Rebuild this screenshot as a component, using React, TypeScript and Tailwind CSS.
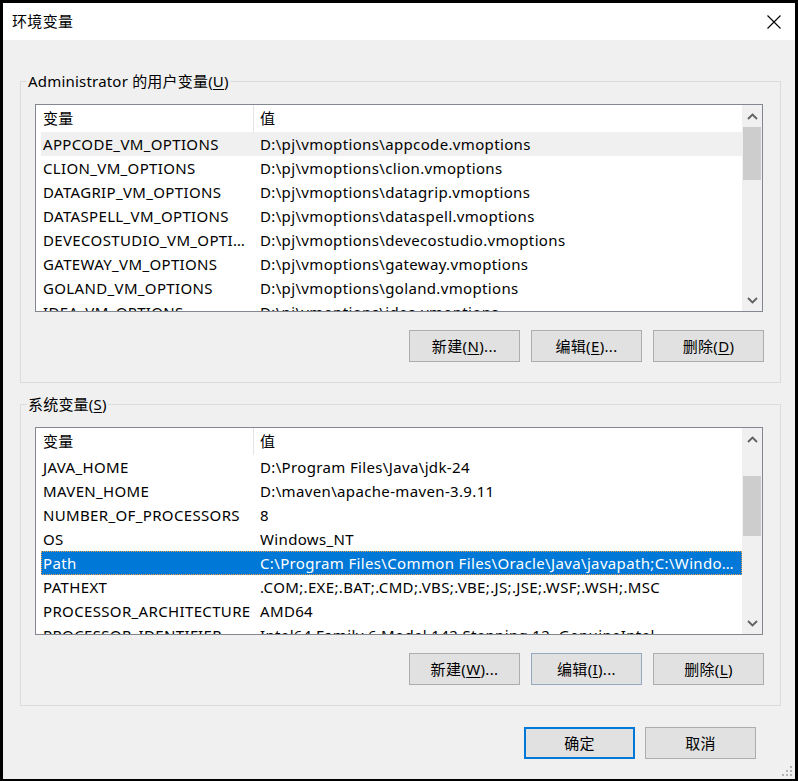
import React from "react";

type Row = { name: string; value: string; hover?: boolean; selected?: boolean };

const userRows: Row[] = [
  { name: "APPCODE_VM_OPTIONS", value: "D:\\pj\\vmoptions\\appcode.vmoptions", hover: true },
  { name: "CLION_VM_OPTIONS", value: "D:\\pj\\vmoptions\\clion.vmoptions" },
  { name: "DATAGRIP_VM_OPTIONS", value: "D:\\pj\\vmoptions\\datagrip.vmoptions" },
  { name: "DATASPELL_VM_OPTIONS", value: "D:\\pj\\vmoptions\\dataspell.vmoptions" },
  { name: "DEVECOSTUDIO_VM_OPTIONS", value: "D:\\pj\\vmoptions\\devecostudio.vmoptions" },
  { name: "GATEWAY_VM_OPTIONS", value: "D:\\pj\\vmoptions\\gateway.vmoptions" },
  { name: "GOLAND_VM_OPTIONS", value: "D:\\pj\\vmoptions\\goland.vmoptions" },
  { name: "IDEA_VM_OPTIONS", value: "D:\\pj\\vmoptions\\idea.vmoptions" },
];

const sysRows: Row[] = [
  { name: "JAVA_HOME", value: "D:\\Program Files\\Java\\jdk-24" },
  { name: "MAVEN_HOME", value: "D:\\maven\\apache-maven-3.9.11" },
  { name: "NUMBER_OF_PROCESSORS", value: "8" },
  { name: "OS", value: "Windows_NT" },
  {
    name: "Path",
    value:
      "C:\\Program Files\\Common Files\\Oracle\\Java\\javapath;C:\\Windows\\system32;C:\\Windows;C:\\Windows\\System32\\Wbem",
    selected: true,
  },
  { name: "PATHEXT", value: ".COM;.EXE;.BAT;.CMD;.VBS;.VBE;.JS;.JSE;.WSF;.WSH;.MSC" },
  { name: "PROCESSOR_ARCHITECTURE", value: "AMD64" },
  { name: "PROCESSOR_IDENTIFIER", value: "Intel64 Family 6 Model 142 Stepping 12, GenuineIntel" },
];

function ChevronUp() {
  return (
    <svg width="11" height="7" viewBox="0 0 11 7">
      <path d="M1 6 L5.5 1.5 L10 6" fill="none" stroke="#606060" strokeWidth="1.8" />
    </svg>
  );
}
function ChevronDown() {
  return (
    <svg width="11" height="7" viewBox="0 0 11 7">
      <path d="M1 1 L5.5 5.5 L10 1" fill="none" stroke="#606060" strokeWidth="1.8" />
    </svg>
  );
}

function ListView({ rows, thumbTop, thumbH }: { rows: Row[]; thumbTop: string; thumbH: string }) {
  return (
    <div className="ml-[14px] w-[728px] h-[208px] border border-[#828790] bg-white flex">
      <div className="flex-1 min-w-0 overflow-hidden flex flex-col pl-[5px]">
        <div className="h-[27px] shrink-0 flex">
          <div className="w-[212px] pl-[2px] flex items-center">变量</div>
          <div className="w-px bg-[#e5e5e5]" />
          <div className="flex-1 pl-[6px] flex items-center">值</div>
        </div>
        {rows.map((r) => (
          <div
            key={r.name}
            className={
              "h-[24px] shrink-0 flex items-center " +
              (r.selected
                ? "bg-[#0078d7] text-white outline outline-1 outline-dotted outline-[#e8a050] -outline-offset-1"
                : r.hover
                ? "bg-[#f0f0f0]"
                : "")
            }
          >
            <div className="w-[213px] pl-[2px] pr-[2px] whitespace-nowrap overflow-hidden text-ellipsis">{r.name}</div>
            <div className="flex-1 min-w-0 pl-[6px] pr-[6px] whitespace-nowrap overflow-hidden text-ellipsis">{r.value}</div>
          </div>
        ))}
      </div>
      <div className="w-[20px] shrink-0 bg-[#f0f0f0] flex flex-col">
        <div className="h-[22px] flex items-center justify-center">
          <ChevronUp />
        </div>
        <div className="flex-1">
          <div className={"mx-[1px] bg-[#cdcdcd] " + thumbTop + " " + thumbH} />
        </div>
        <div className="h-[22px] flex items-center justify-center">
          <ChevronDown />
        </div>
      </div>
    </div>
  );
}

function Btn({ children, variant }: { children: React.ReactNode; variant?: "hover" | "default" }) {
  const border =
    variant === "default"
      ? "border-2 border-[#0078d7]"
      : variant === "hover"
      ? "border border-[#94a8c0]"
      : "border border-[#adadad]";
  return (
    <div className={"w-[111px] h-[32px] bg-[#e1e1e1] flex items-center justify-center " + border}>{children}</div>
  );
}

function U({ c }: { c: string }) {
  return <span className="underline underline-offset-[2px] decoration-1">{c}</span>;
}

function Group({
  title,
  rows,
  thumbTop,
  thumbH,
  buttons,
}: {
  title: React.ReactNode;
  rows: Row[];
  thumbTop: string;
  thumbH: string;
  buttons: React.ReactNode;
}) {
  return (
    <div className="w-[761px] border border-[#dcdcdc] pb-[20px]">
      <div className="-mt-[11px] h-[20px] ml-[6px] flex">
        <div className="px-[1px] bg-[#f0f0f0] leading-[20px] tracking-[0.2px]">{title}</div>
      </div>
      <div className="mt-[13px]">
        <ListView rows={rows} thumbTop={thumbTop} thumbH={thumbH} />
      </div>
      <div className="mt-[18px] ml-[388px] flex gap-[11px]">{buttons}</div>
    </div>
  );
}

export default function App() {
  return (
    <div className="w-[798px] h-[781px] bg-black pt-[3px] px-[3px] pb-[2px] flex font-['Noto_Sans','Noto_Sans_CJK_SC',sans-serif] text-[15px] tracking-[0.35px] text-black">
      <div className="relative flex-1 flex flex-col bg-[#f0f0f0]">
        <div className="h-[37px] bg-white flex items-center pl-[9px] pr-[14px] justify-between">
          <span>环境变量</span>
          <svg width="14" height="14" viewBox="0 0 14 14">
            <path d="M0.5 0.5 L13.5 13.5 M13.5 0.5 L0.5 13.5" stroke="#000" strokeWidth="1.1" />
          </svg>
        </div>
        <div className="pl-[17px] pt-[41px] flex flex-col">
          <Group
            title={
              <>
                Administrator 的用户变量(<U c="U" />)
              </>
            }
            rows={userRows}
            thumbTop="mt-0"
            thumbH="h-[53px]"
            buttons={
              <>
                <Btn>
                  新建(<U c="N" />)...
                </Btn>
                <Btn>
                  编辑(<U c="E" />)...
                </Btn>
                <Btn>
                  删除(<U c="D" />)
                </Btn>
              </>
            }
          />
          <div className="h-[21px]" />
          <Group
            title={
              <>
                系统变量(<U c="S" />)
              </>
            }
            rows={sysRows}
            thumbTop="mt-[26px]"
            thumbH="h-[60px]"
            buttons={
              <>
                <Btn>
                  新建(<U c="W" />)...
                </Btn>
                <Btn variant="hover">
                  编辑(<U c="I" />)...
                </Btn>
                <Btn>
                  删除(<U c="L" />)
                </Btn>
              </>
            }
          />
          <div className="mt-[21px] ml-[504px] flex gap-[10px]">
            <Btn variant="default">确定</Btn>
            <Btn>取消</Btn>
          </div>
        </div>
        <div className="absolute right-[2px] bottom-[2px]">
          <svg width="12" height="12" viewBox="0 0 12 12" fill="#b4b4b4">
            <rect x="9" y="1" width="2" height="2" />
            <rect x="5" y="5" width="2" height="2" />
            <rect x="9" y="5" width="2" height="2" />
            <rect x="1" y="9" width="2" height="2" />
            <rect x="5" y="9" width="2" height="2" />
            <rect x="9" y="9" width="2" height="2" />
          </svg>
        </div>
      </div>
    </div>
  );
}
